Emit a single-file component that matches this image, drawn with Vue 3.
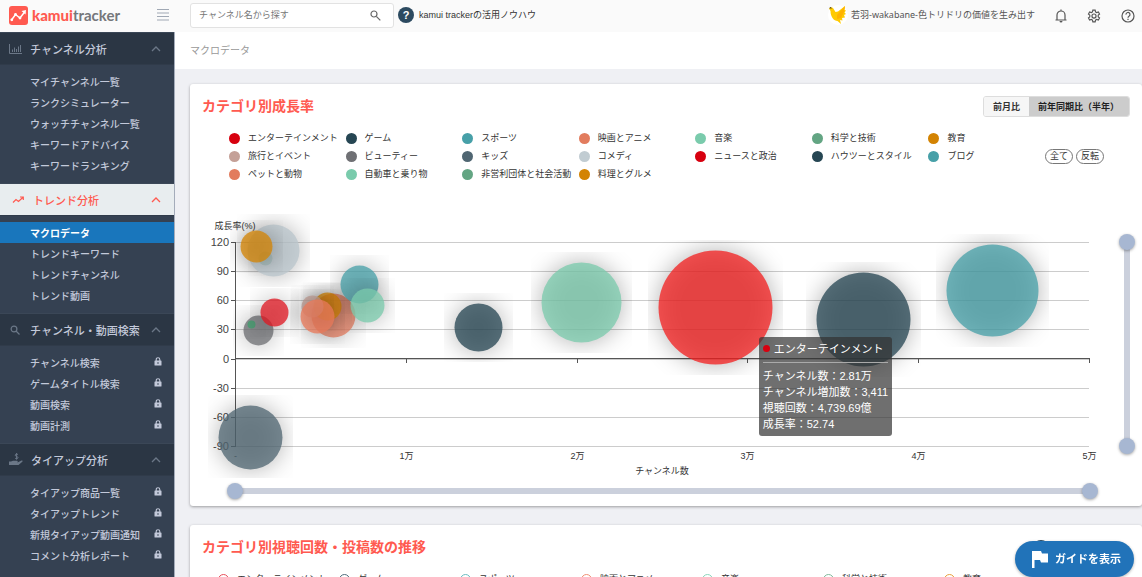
<script setup>
import { ref } from 'vue'

const groups = [
  {
    icon: 'bars', title: 'チャンネル分析', locked: false,
    items: ['マイチャンネル一覧', 'ランクシミュレーター', 'ウォッチチャンネル一覧', 'キーワードアドバイス', 'キーワードランキング'],
  },
  {
    icon: 'trend', title: 'トレンド分析', locked: false, open: true,
    items: ['マクロデータ', 'トレンドキーワード', 'トレンドチャンネル', 'トレンド動画'],
  },
  {
    icon: 'lens', title: 'チャンネル・動画検索', locked: true,
    items: ['チャンネル検索', 'ゲームタイトル検索', '動画検索', '動画計測'],
  },
  {
    icon: 'hand', title: 'タイアップ分析', locked: true,
    items: ['タイアップ商品一覧', 'タイアップトレンド', '新規タイアップ動画通知', 'コメント分析レポート'],
  },
]

const categories = [
  ['エンターテインメント', '#d7000f'], ['ゲーム', '#264653'], ['スポーツ', '#47a0a8'],
  ['映画とアニメ', '#e27c5e'], ['音楽', '#7acbac'], ['科学と技術', '#63a583'], ['教育', '#d38302'],
  ['旅行とイベント', '#c4a097'], ['ビューティー', '#6f7074'], ['キッズ', '#506672'],
  ['コメディ', '#c1ccd2'], ['ニュースと政治', '#d7000f'], ['ハウツーとスタイル', '#264653'], ['ブログ', '#47a0a8'],
  ['ペットと動物', '#e27c5e'], ['自動車と乗り物', '#7acbac'], ['非営利団体と社会活動', '#63a583'], ['料理とグルメ', '#d38302'],
]

const lineCategories = [
  ['エンターテインメント', '#e8505b'], ['ゲーム', '#4f6d7d'], ['スポーツ', '#6bbcc2'],
  ['映画とアニメ', '#ef8f74'], ['音楽', '#8ad6bb'], ['科学と技術', '#7fb99b'], ['教育', '#e8a13c'],
]

const yTicks = [120, 90, 60, 30, 0, -30, -60, -90].map((v, i) => ({ v, y: Math.round(52 + i * 29.15) + 0.5 }))
const xTicks = ['-', '1万', '2万', '3万', '4万', '5万'].map((v, i) => ({ v, x: Math.round(45 + i * 170.8) + 0.5 }))

const bubbles = [
  { x: 75, y: 68, r: 7, c: '#63a583' },
  { x: 83, y: 60, r: 26, c: '#b9c5cc' },
  { x: 66, y: 56, r: 16, c: '#d38302' },
  { x: 68, y: 140, r: 15, c: '#6f7074' },
  { x: 61, y: 134, r: 4, c: '#3f9c6c' },
  { x: 84, y: 122, r: 14, c: '#e01822' },
  { x: 143, y: 125, r: 22, c: '#e27c5e' },
  { x: 137, y: 116, r: 14, c: '#d38302' },
  { x: 122, y: 116, r: 11, c: '#c4a097' },
  { x: 127, y: 126, r: 17, c: '#e8795a' },
  { x: 169, y: 94, r: 19, c: '#47a0a8' },
  { x: 177, y: 115, r: 17, c: '#7acbac' },
  { x: 60, y: 247, r: 32, c: '#506672' },
  { x: 288, y: 137, r: 24, c: '#264653' },
  { x: 391, y: 112, r: 40, c: '#7acbac' },
  { x: 525, y: 117, r: 57, c: '#f31f1f' },
  { x: 673, y: 129, r: 47, c: '#264653' },
  { x: 802, y: 100, r: 46, c: '#47a0a8' },
]

const query = ref('')
const xMin = ref(0)
const xMax = ref(100)
const yMin = ref(0)
const yMax = ref(100)
</script>

<template>
  <div class="app">
    <header class="topbar">
      <div class="brand">
        <a class="logo" href="#">
          <svg width="19" height="19" viewBox="0 0 19 19">
            <rect width="19" height="19" rx="3" fill="#ff5a50" />
            <path d="M2.5 14 6.500 8.500 11 12 16 5.500" fill="none" stroke="#fff" stroke-width="1.500" />
            <circle cx="2.800" cy="13.800" r="1.400" fill="#fff" /><circle cx="6.500" cy="8.500" r="1.400" fill="#fff" />
            <circle cx="11" cy="12" r="1.400" fill="#fff" /><path d="M12.500 5 17 4l-.5 4.500z" fill="#fff" />
          </svg>
          <span class="wordmark"><b>kamui</b>tracker</span>
        </a>
        <button class="icon-btn" aria-label="メニュー">
          <svg width="12" height="12" viewBox="0 0 12 12" stroke="#a0a8b4"><path d="M0 .5h12M0 4h12M0 7.500h12M0 11h12" /></svg>
        </button>
      </div>
      <form class="search" @submit.prevent>
        <input v-model="query" type="text" placeholder="チャンネル名から探す" aria-label="チャンネル名から探す" />
        <button class="icon-btn" aria-label="検索">
          <svg width="11" height="11" viewBox="0 0 11 11" fill="none" stroke="#666" stroke-width="1.200"><circle cx="4" cy="4" r="3" /><path d="m6.300 6.300 4 4" /></svg>
        </button>
      </form>
      <a class="knowhow" href="#"><span class="badge">?</span>kamui trackerの活用ノウハウ</a>
      <div class="account">
        <a class="user" href="#">
          <svg width="20" height="20" viewBox="0 0 20 20">
            <circle cx="10" cy="10" r="10" fill="#fff" />
            <path d="M1 3.500 3 2l2 1 2.500 4L10 6.500 17 1l-.5 4 1.500.5-1.500 2L18 9l-2 1 1 2.500-3 .5.500 2.500-2.500-.5 1 4-3.500-3C6 16 2.500 12 2.500 6z" fill="#ffca00" />
            <path d="M9 10l8-9-1 6-3 6-4 1z" fill="#ffb300" /><path d="M1 3.300 2.500 2 4 3.500z" fill="#333" />
          </svg>
          <span>若羽-wakabane-色トリドリの価値を生み出す</span>
        </a>
        <button class="icon-btn" aria-label="通知">
          <svg width="12" height="14" viewBox="0 0 12 14" fill="none" stroke="#555" stroke-width="1.200"><path d="M.5 11h11M2 11V6a4 4 0 0 1 8 0v5M6 2V.5" /><path d="M4.500 12h3a1.500 1.500 0 0 1-3 0z" fill="#555" stroke="none" /></svg>
        </button>
        <button class="icon-btn" aria-label="設定">
          <svg width="14" height="14" viewBox="0 0 24 24" fill="none" stroke="#555" stroke-width="2"><circle cx="12" cy="12" r="3.500" /><path d="M10 2h4l.6 3 2 1.200 2.900-1.100 2 3.500-2.300 2v2.800l2.300 2-2 3.500-2.900-1.100-2 1.200-.6 3h-4l-.6-3-2-1.200-2.900 1.100-2-3.500 2.300-2v-2.800l-2.300-2 2-3.500 2.900 1.100 2-1.200z" /></svg>
        </button>
        <button class="icon-btn" aria-label="ヘルプ">
          <svg width="14" height="14" viewBox="0 0 14 14" fill="none" stroke="#555" stroke-width="1.200"><circle cx="7" cy="7" r="6" /><path d="M5 5.600a2 2 0 1 1 3 1.600c-.7.5-1 .8-1 1.600M7 9.800v1.200" /></svg>
        </button>
      </div>
    </header>

    <div class="body">
      <nav class="sidebar">
        <section v-for="g in groups" :key="g.title">
          <button class="group" :class="{ open: g.open }">
            <svg v-if="g.icon === 'bars'" width="13" height="10" viewBox="0 0 13 10" fill="none" stroke="currentColor"><path d="M.5 0v9.500H13M3.500 8V5.500M5.500 8V3.500M7.500 8V5M9.500 8V2.500M11.500 8V1" /></svg>
            <svg v-else-if="g.icon === 'trend'" width="13" height="10" viewBox="0 0 13 10" fill="none" stroke="currentColor" stroke-width="1.200"><path d="m1 7.500 3-3 2.500 2L11 2.200M8 2h3.300v3" /></svg>
            <svg v-else-if="g.icon === 'lens'" width="13" height="10" viewBox="0 0 13 10" fill="none" stroke="currentColor" stroke-width="1.200"><circle cx="5" cy="4" r="2.900" /><path d="m7 6 3.500 3.500" /></svg>
            <svg v-else width="14" height="13" viewBox="0 0 14 13" fill="currentColor"><path d="M0 8.500h2L4 7.800h4c1 0 1 1.500 0 1.500H6h3l3.500-1.800c1-.3 1.500.6.8 1.200L9.500 12H0z" /><path d="M9 1.800C8.500.9 6.200.8 6.200 2.200S9 3.300 9 4.600 6.500 6 6 5M7.600 0v6.600" fill="none" stroke="currentColor" /></svg>
            <span>{{ g.title }}</span>
            <svg class="chevron" width="10" height="6" viewBox="0 0 10 6" fill="none" stroke="currentColor" stroke-width="1.300"><path d="m1 5 4-4 4 4" /></svg>
          </button>
          <ul>
            <li v-for="item in g.items" :key="item">
              <a href="#" :class="{ current: item === 'マクロデータ' }">
                {{ item }}
                <svg v-if="g.locked" width="8" height="12" viewBox="0 0 8 12"><path d="M2.200 4V2.500a1.800 1.800 0 0 1 3.600 0V4" fill="none" stroke="#c3c9da" stroke-width="1.100" /><rect x=".5" y="3.500" width="7" height="5" rx=".6" fill="#c3c9da" /><circle cx="4" cy="6" r=".8" fill="#354152" /></svg>
              </a>
            </li>
          </ul>
        </section>
      </nav>

      <main>
        <div class="crumb">マクロデータ</div>

        <section class="card">
          <div class="card-head">
            <h2>カテゴリ別成長率</h2>
            <div class="toggle">
              <button>前月比</button><button class="on">前年同期比（半年）</button>
            </div>
          </div>
          <div class="legend-row">
            <ul class="legend">
              <li v-for="[name, color] in categories" :key="name"><i :style="{ background: color }"></i>{{ name }}</li>
            </ul>
            <div class="pills"><button>全て</button><button>反転</button></div>
          </div>

          <div class="plot">
            <div class="chart">
              <svg viewBox="0 0 910 288" role="img" aria-label="カテゴリ別成長率">
                <defs>
                  <filter v-for="(b, i) in bubbles" :id="'shade' + i" :key="i" filterUnits="userSpaceOnUse" :x="b.x - b.r - 10" :y="b.y - b.r - 10" :width="b.r * 2 + 21" :height="b.r * 2 + 21" color-interpolation-filters="sRGB">
                    <feDropShadow dx="0" dy="0" stdDeviation="12" flood-color="#000" flood-opacity="0.4" />
                  </filter>
                </defs>
                <g stroke="#ccc">
                  <path v-for="t in yTicks" :key="t.v" :d="`M45 ${t.y}H899`" />
                </g>
                <g stroke="#555">
                  <path d="M45.500 52V257M45 168.500H899" />
                  <path v-for="t in yTicks" :key="t.v" :d="`M41 ${t.y}h4`" />
                  <path v-for="t in xTicks.slice(1)" :key="t.v" :d="`M${t.x} 168v5`" />
                </g>
                <g class="axis">
                  <text v-for="t in yTicks" :key="t.v" x="39" :y="t.y + 3" text-anchor="end">{{ t.v }}</text>
                </g>
                <g class="labels">
                  <text v-for="t in xTicks" :key="t.v" :x="t.x" y="269" text-anchor="middle">{{ t.v }}</text>
                  <text x="45" y="39" text-anchor="middle">成長率(%)</text>
                  <text x="472" y="284" text-anchor="middle">チャンネル数</text>
                </g>
                <circle v-for="(b, i) in bubbles" :key="i" :cx="b.x + 0.5" :cy="b.y + 0.5" :r="b.r" :fill="b.c" fill-opacity="0.76" :filter="`url(#shade${i})`" />
              </svg>
              <div class="tooltip">
                <strong><i></i>エンターテインメント</strong>
                <p>チャンネル数：2.81万</p>
                <p>チャンネル増加数：3,411</p>
                <p>視聴回数：4,739.69億</p>
                <p>成長率：52.74</p>
              </div>
            </div>
            <div class="range vertical">
              <input v-model="yMin" type="range" min="0" max="100" aria-label="成長率の下限" />
              <input v-model="yMax" type="range" min="0" max="100" aria-label="成長率の上限" />
            </div>
            <div class="range horizontal">
              <input v-model="xMin" type="range" min="0" max="100" aria-label="チャンネル数の下限" />
              <input v-model="xMax" type="range" min="0" max="100" aria-label="チャンネル数の上限" />
            </div>
          </div>
        </section>

        <section class="card">
          <div class="card-head second">
            <h2>カテゴリ別視聴回数・投稿数の推移</h2>
            <button class="badge">?</button>
          </div>
          <ul class="legend lines">
            <li v-for="[name, color] in lineCategories" :key="name"><i :style="{ borderColor: color }"></i>{{ name }}</li>
          </ul>
        </section>
      </main>
    </div>

    <button class="guide">
      <svg width="16" height="17" viewBox="0 0 16 17" fill="#fff"><path d="M0 0h9l1 2.500h6v9H9L8 9H2.500v8H0z" /></svg>
      ガイドを表示
    </button>
  </div>
</template>

<style>
body {
  margin: 0;
  overflow: hidden;
}
</style>

<style scoped>
.app {
  height: 100vh;
  display: flex;
  flex-direction: column;
  overflow: hidden;
  background: #eff0f4;
  color: #333;
  font-family: "Liberation Sans", "Noto Sans CJK JP", sans-serif;
  font-size: 9px;
  line-height: 18px;
}
.app * {
  box-sizing: border-box;
}
button {
  font: inherit;
  color: inherit;
  border: 0;
  padding: 0;
  background: none;
  cursor: pointer;
}
a {
  color: inherit;
  text-decoration: none;
}
ul {
  list-style: none;
  margin: 0;
  padding: 0;
}
svg {
  display: block;
  flex: none;
}
.topbar {
  flex: none;
  height: 32px;
  display: flex;
  align-items: center;
  background: #fafafa;
}
.brand {
  width: 190px;
  padding: 0 21px 2px 9px;
  display: flex;
  align-items: center;
  justify-content: space-between;
}
.logo {
  display: flex;
  align-items: center;
  gap: 4px;
}
.wordmark {
  font: 700 15px/20px Lato, sans-serif;
  color: #75777b;
}
.wordmark b {
  color: #ff5a50;
}
.search {
  width: 204px;
  height: 25px;
  margin-bottom: 2px;
  padding: 0 12px 0 8px;
  display: flex;
  align-items: center;
  background: #fff;
  border: 1px solid #e2e2e2;
  border-radius: 3px;
}
.search input {
  flex: 1;
  min-width: 0;
  border: 0;
  padding: 0;
  outline: 0;
  font: inherit;
  background: none;
}
.search input::placeholder {
  color: #777;
}
.knowhow {
  display: flex;
  align-items: center;
  gap: 5px;
  margin-left: 4px;
  padding-bottom: 2px;
}
.badge {
  width: 16px;
  height: 16px;
  border-radius: 8px;
  background: #2c4a60;
  color: #fff;
  font-size: 11px;
  font-weight: 700;
  line-height: 16px;
  text-align: center;
}
.account {
  margin-left: auto;
  padding-right: 7px;
  display: flex;
  align-items: center;
  gap: 20px;
}
.user {
  display: flex;
  align-items: center;
  gap: 3px;
  padding-bottom: 2px;
  color: #555;
  font-family: "Noto Sans", "Noto Sans CJK JP", sans-serif;
}
.body {
  flex: 1;
  min-height: 0;
  display: flex;
}
.sidebar {
  flex: none;
  width: 175px;
  background: #354152;
  border-right: 1px solid #a4acba;
  color: #c3c9da;
  font-family: "Noto Sans CJK JP", sans-serif;
  font-size: 10px;
  font-weight: 500;
}
.group {
  width: 100%;
  height: 33px;
  display: flex;
  align-items: center;
  gap: 8px;
  padding: 0 13px 0 9px;
  background: #2b3644;
  border-top: 1px solid #3b4757;
  border-bottom: 1px solid #303b4a;
  color: #6b7787;
  font-size: 11px;
}
.group span {
  color: #c3c9da;
}
.group.open,
.group.open span {
  background: #e8edef;
  color: #ff5a50;
}
.group.open {
  padding-left: 12px;
}
.chevron {
  margin-left: auto;
}
.sidebar ul {
  padding: 6px 0 7px;
}
.sidebar li a {
  height: 21px;
  padding: 0 12px 0 30px;
  display: flex;
  align-items: center;
  justify-content: space-between;
  line-height: 20px;
}
.sidebar .current {
  background: #1976bc;
  color: #fff;
  font-weight: 700;
}
main {
  flex: 1;
  min-width: 0;
}
.crumb {
  height: 37px;
  padding-left: 15px;
  background: #fff;
  color: #999;
  font-size: 10px;
  line-height: 37px;
}
.card {
  margin: 15px 0 19px 15px;
  background: #fff;
  border-radius: 3px;
  box-shadow: 0 1px 3px rgba(0, 0, 0, 0.35);
}
.card-head {
  height: 45px;
  padding: 0 12px;
  display: flex;
  align-items: center;
  justify-content: space-between;
}
.card-head.second {
  padding-right: 93px;
}
h2 {
  margin: 0;
  padding-bottom: 2px;
  color: #ff5a50;
  font-size: 14px;
  line-height: 20px;
}
.toggle {
  display: flex;
  border: 1px solid #ddd;
  border-radius: 3px;
  overflow: hidden;
  font-weight: 700;
}
.toggle button {
  height: 19px;
  padding: 0 9px;
  background: #f6f6f6;
}
.toggle .on {
  padding: 0 10px 0 9px;
  background: #ccc;
  color: #222;
}
.legend-row {
  display: flex;
  align-items: center;
  padding: 0 38px 0 39px;
}
.legend {
  flex: 0 0 816px;
  display: grid;
  grid-template-columns: repeat(7, 1fr);
}
.legend li {
  display: flex;
  align-items: center;
  gap: 8px;
  white-space: nowrap;
}
.legend i {
  width: 11px;
  height: 11px;
  border-radius: 6px;
}
.legend.lines {
  width: 847px;
  margin-left: 28px;
}
.legend.lines i {
  border: 1px solid;
  background: #fff;
}
.pills {
  margin-left: auto;
  display: flex;
  gap: 3px;
}
.pills button {
  height: 15px;
  padding: 0 4px;
  border: 1px solid #777;
  border-radius: 8px;
  line-height: 13px;
  white-space: nowrap;
}
.plot {
  margin-top: 7px;
  display: grid;
  grid-template-columns: 1fr 42px;
}
.chart {
  position: relative;
}
.chart svg {
  width: 100%;
  height: auto;
}
.axis {
  font-size: 11px;
  fill: #444;
}
.labels {
  font-size: 9px;
  fill: #333;
}
.tooltip {
  position: absolute;
  left: 62.5%;
  top: 51%;
  padding: 4px;
  border-radius: 3px;
  background: rgba(50, 50, 50, 0.7);
  color: #fff;
  font-size: 11px;
  line-height: 16px;
  white-space: nowrap;
}
.tooltip strong {
  display: flex;
  align-items: center;
  gap: 4px;
  margin-bottom: 5px;
  padding-bottom: 5px;
  border-bottom: 1px solid #aaa;
  font-weight: 400;
}
.tooltip i {
  width: 7px;
  height: 7px;
  border-radius: 4px;
  background: #d7000f;
}
.tooltip p {
  margin: 0;
}
.range {
  display: grid;
}
.range::before {
  content: "";
  grid-area: 1 / 1;
  place-self: center;
  background: #cbd0dc;
}
.range input {
  grid-area: 1 / 1;
  width: 100%;
  height: 16px;
  margin: 0;
  appearance: none;
  background: none;
  pointer-events: none;
}
.range input::-webkit-slider-thumb {
  appearance: none;
  pointer-events: auto;
  width: 16px;
  height: 16px;
  border-radius: 8px;
  background: #a7b7d2;
  box-shadow: 0 1px 3px rgba(0, 0, 0, 0.35);
}
.horizontal {
  margin: 5px 2px 7px 37px;
}
.horizontal::before {
  width: calc(100% - 16px);
  height: 6px;
}
.vertical {
  width: 16px;
  height: 220px;
  margin: 44px 0 0 19px;
}
.vertical::before {
  width: 6px;
  height: calc(100% - 16px);
}
.vertical input {
  width: 16px;
  height: 100%;
  writing-mode: vertical-lr;
  direction: rtl;
}
.guide {
  position: fixed;
  right: 8px;
  bottom: 0;
  height: 36px;
  padding: 0 13px 0 17px;
  display: flex;
  align-items: center;
  gap: 7px;
  border-radius: 18px;
  background: #2173b9;
  color: #fff;
  font-size: 11px;
  font-weight: 700;
  box-shadow: 0 1px 3px rgba(0, 0, 0, 0.3);
}
</style>
